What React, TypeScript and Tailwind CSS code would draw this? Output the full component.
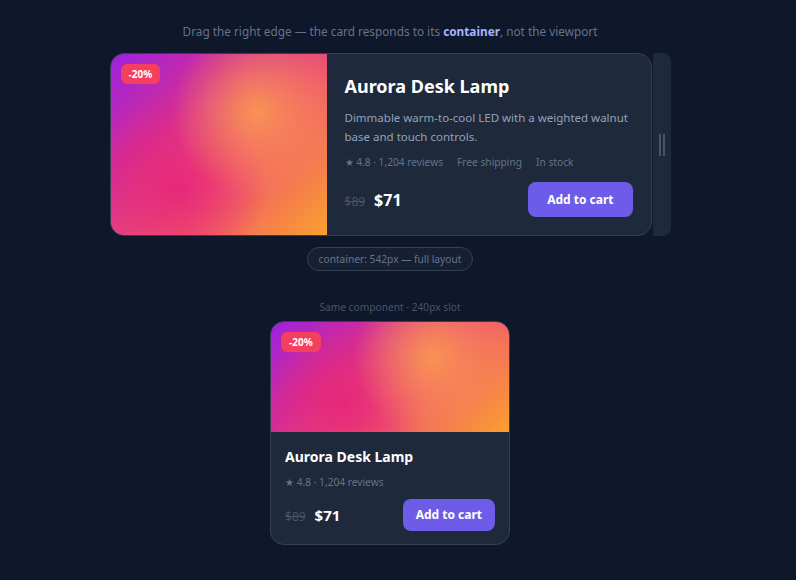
import { ReactNode } from "react";

const font = { fontFamily: '"Noto Sans", "Open Sans", sans-serif' };

type Product = {
  name: string;
  desc: string;
  rating: number;
  reviews: string;
  was: number;
  price: number;
  discount: string;
};

const lamp: Product = {
  name: "Aurora Desk Lamp",
  desc: "Dimmable warm-to-cool LED with a weighted walnut base and touch controls.",
  rating: 4.8,
  reviews: "1,204",
  was: 89,
  price: 71,
  discount: "-20%",
};

// warm aurora blend behind the product
const glow =
  "bg-[radial-gradient(circle_at_68%_32%,rgba(250,150,82,0.95)_0%,rgba(250,150,82,0)_45%),radial-gradient(circle_at_30%_74%,rgba(232,38,120,0.95)_0%,rgba(232,38,120,0)_45%),linear-gradient(135deg,#9b22e0_0%,#d02c9a_30%,#ee5470_58%,#fba02e_100%)]";

const ProductCard = ({ p }: { p: Product }) => (
  <div className="@container w-full">
    <div className="flex flex-col @[420px]:flex-row rounded-[14px] border border-[#334155] bg-[#1e293b] overflow-hidden">
      <div className={`relative h-[110px] @[420px]:h-auto @[420px]:w-[40%] shrink-0 ${glow}`}>
        <span className="absolute left-[10px] top-[10px] rounded-[6px] bg-[#f43f5e] px-[8px] py-[3px] text-[10px] font-bold leading-[14px] text-white">
          {p.discount}
        </span>
      </div>
      <div className="flex flex-1 flex-col px-[14px] pt-[14px] pb-[13px] @[420px]:px-[18px] @[420px]:pt-[18px] @[420px]:pb-[18px]">
        <h3 className="text-[14px] leading-[22px] @[420px]:text-[18px] @[420px]:leading-[28px] font-bold text-white">
          {p.name}
        </h3>
        <p className="hidden @[420px]:block mt-[8px] text-[11.5px] leading-[19px] text-[#94a3b8]">
          {p.desc}
        </p>
        <div className="mt-[6px] @[420px]:mt-[8px] flex gap-[14px] text-[10.2px] leading-[16px] text-[#64748b]">
          <span>
            ★ {p.rating} · {p.reviews} reviews
          </span>
          <span className="hidden @[420px]:inline">Free shipping</span>
          <span className="hidden @[420px]:inline">In stock</span>
        </div>
        <div className="mt-[9px] @[420px]:mt-[12px] flex items-center justify-between">
          <div className="flex items-baseline gap-[9px]">
            <span className="text-[12px] text-[#475569] line-through">${p.was}</span>
            <span className="text-[15px] @[420px]:text-[16px] font-bold text-white">${p.price}</span>
          </div>
          <button className="h-[32px] @[420px]:h-[35px] rounded-[8px] bg-[#6c5ce7] px-[13px] @[420px]:px-[19px] text-[12px] font-bold text-white">
            Add to cart
          </button>
        </div>
      </div>
    </div>
  </div>
);

const Resizable = ({ children }: { children: ReactNode }) => (
  <div className="flex items-stretch gap-[1px]">
    <div className="w-[542px]">{children}</div>
    <div className="flex w-[18px] items-center justify-center gap-[2px] rounded-r-[8px] bg-[#1e293b]">
      <span className="h-[22px] w-[2px] bg-[#475569]" />
      <span className="h-[22px] w-[2px] bg-[#475569]" />
    </div>
  </div>
);

export default function App() {
  return (
    <div className="min-h-screen bg-[#0f172a]" style={font}>
      <div className="flex w-[780px] flex-col items-center pt-[22px]">
        <p className="text-[11.8px] leading-[18px] text-[#64748b]">
          Drag the right edge — the card responds to its{" "}
          <b className="font-bold text-[#a5b4fc]">container</b>, not the viewport
        </p>
        <div className="mt-[13px]">
          <Resizable>
            <ProductCard p={lamp} />
          </Resizable>
        </div>
        <span className="mt-[11px] rounded-full border border-[#334155] bg-[#172033] px-[11px] py-[4px] text-[10.2px] leading-[14px] text-[#64748b]">
          container: 542px — full layout
        </span>
        <p className="mt-[28px] text-[10.2px] leading-[16px] text-[#475569]">
          Same component · 240px slot
        </p>
        <div className="mt-[6px] w-[240px]">
          <ProductCard p={lamp} />
        </div>
      </div>
    </div>
  );
}
